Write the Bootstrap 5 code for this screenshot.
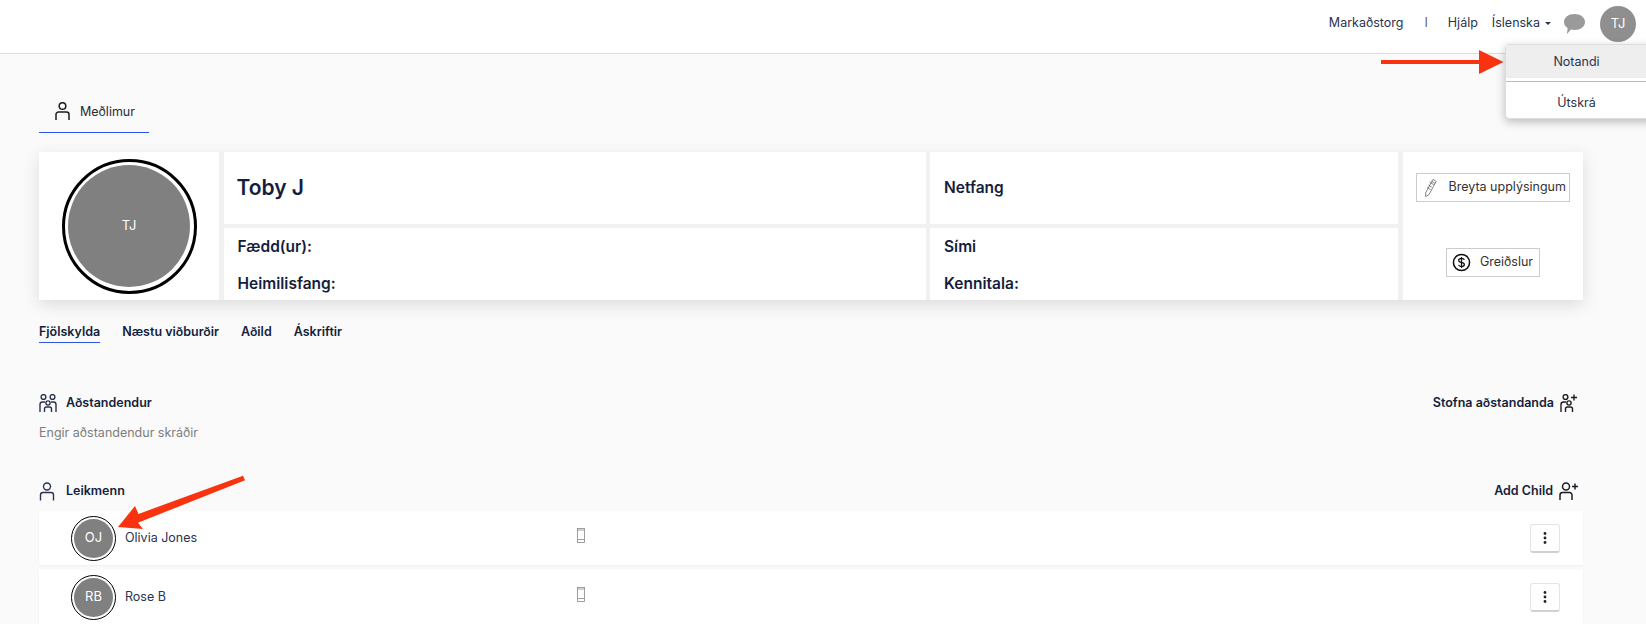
<!DOCTYPE html>
<html lang="is">
<head>
<meta charset="utf-8">
<title>Meðlimur</title>
<link href="https://cdn.jsdelivr.net/npm/bootstrap@5.3.0/dist/css/bootstrap.min.css" rel="stylesheet">
<style>
html,body{height:624px;overflow:hidden}
body{background:#fafafa;font-family:"Inter","Liberation Sans",sans-serif;color:#141e3c;font-size:12.5px;position:relative}
.topbar{height:54px;background:#fff;border-bottom:1px solid #dcdcdc;padding:0 10px 6px 0}
.topbar a{color:#2a3350;text-decoration:none;font-size:12.5px}
.sep{margin:0 20px 0 21px;color:#666}
.lang{margin:0 0 0 14px}
.caret-mark{display:inline-block;border:3px solid transparent;border-top-color:#2a3350;border-bottom:0;margin-left:5px;vertical-align:2px}
.chat-ico{margin:0 14px 0 12px}
.avatar-top{width:36px;height:36px;background:#8f8f8f;color:#fff;font-size:13px}
.user-menu{display:block;position:absolute;top:44px;left:1505px;width:160px;margin:0;padding:0;border:1px solid #ddd;border-radius:4px;box-shadow:0 3px 10px rgba(0,0,0,.25);height:75px;text-align:left;font-size:13px}
.user-menu .dropdown-item{width:141px;text-align:center;color:#2a3350;font-size:12.5px}
.menu-active{background:#eee;height:33px;line-height:33px;padding:0}
.menu-plain{height:40px;line-height:42px;padding:0}
.user-menu hr{margin:3px 0 0;border-color:#bbb}
.page-body{padding:0 63px 0 39px}
.main-tab{width:110px;height:79px;padding:0 0 12px 16px;border-bottom:1px solid #2a55e5;font-size:12.5px;gap:10px;color:#2b2b33}
.main-tab span{margin-bottom:-2px}
.profile-grid{display:grid;grid-template-columns:180px 702px 468px 180px;grid-template-rows:72px 72px;column-gap:4.5px;row-gap:4px;margin-top:19px;background:#f1f1f1;box-shadow:0 5px 16px rgba(0,0,0,.12)}
.cell{background:#fff}
.cell-avatar{grid-column:1;grid-row:1 / 3}
.cell-actions{grid-column:4;grid-row:1 / 3}
.ring-large{width:135px;height:135px;border:3px solid #000;background:#fff}
.disc-large{width:122px;height:122px;background:#808080;color:#fff;font-size:13px}
.cell-title{padding-left:13px;font-size:21px;font-weight:600}
.cell-label{padding-left:14px;font-size:15.5px;font-weight:600}
.cell-lines{padding:7px 0 0 14px;font-size:15.5px;font-weight:600;gap:13px}
.cell-lines div{line-height:24px}
.cell-actions{padding:21px 0 23px}
.act-btn{border:1px solid #ccc;background:#fff;height:29px;color:#333;font-size:12.5px;padding:0}
.act-edit{width:154px;padding-left:7px;gap:12px;white-space:nowrap}
.act-pay{width:94px;justify-content:center;gap:5px}
.sub-tabs{margin-top:24px;gap:22px;font-size:12.5px;font-weight:600;height:19px}
.sub-tabs span{padding-bottom:4px;height:19px;line-height:15px}
.sub-active{border-bottom:1px solid #2a55e5}
.sec-head{font-size:12.5px;font-weight:600;height:24px}
.sec-one{margin-top:48px}
.empty-note{color:#7d7d7d;font-size:12.5px;margin-top:8px;height:20px;line-height:20px}
.sec-two{margin-top:36px}
.add-link{gap:6px;margin-right:5px;font-size:12.5px}
.head-left{gap:9px}
.head-wide{gap:11px}
.member-row{background:#fff;height:54px;margin-bottom:5px;box-shadow:0 1px 2px rgba(0,0,0,.05);padding-left:32px;padding-right:23px}
.member-rows{margin-top:8px}
.ring-small{width:45px;height:45px;border:1px solid #000;background:#fff}
.disc-small{width:39px;height:39px;background:#808080;color:#fff;font-size:13px}
.member-name{width:452px;margin-left:9px;font-size:12.5px;color:#2a3350}
.phone-ico{margin-bottom:6px}
.kebab{width:30px;height:29px;background:#fff;border:1px solid #e4e4e4;border-bottom:2px solid #d0d0d0;border-radius:3px;padding:0}
.arrows{position:absolute;left:0;top:0;pointer-events:none}
</style>
</head>
<body>
<nav class="topbar d-flex align-items-center justify-content-end">
  <a href="#">Markaðstorg</a>
  <span class="sep">I</span>
  <a href="#">Hjálp</a>
  <a href="#" class="lang">Íslenska<span class="caret-mark"></span></a>
  <svg class="chat-ico" width="23" height="22" viewBox="0 0 23 22"><path d="M11.5 1C17.5 1 22 4.400 22 9s-4.500 8-10.500 8c-1.300 0-2.500-.2-3.600-.5L4 21l.6-6C2.300 13.600 1 11.500 1 9 1 4.400 5.500 1 11.500 1z" fill="#9a9a9a"/></svg>
  <div class="avatar-top rounded-circle d-flex align-items-center justify-content-center">TJ</div>
</nav>

<ul class="dropdown-menu user-menu">
  <li><a class="dropdown-item menu-active" href="#">Notandi</a></li>
  <li><hr class="dropdown-divider"></li>
  <li><a class="dropdown-item menu-plain" href="#">Útskrá</a></li>
</ul>

<main class="page-body">
  <div class="main-tab d-flex align-items-end">
    <svg width="15" height="18" viewBox="0 0 15 18" fill="none" stroke="#1c1c24" stroke-width="1.500"><circle cx="7.500" cy="4" r="3.300"/><path d="M1 18v-5.500A2.500 2.500 0 0 1 3.500 10h8a2.500 2.500 0 0 1 2.500 2.500V18"/></svg>
    <span>Meðlimur</span>
  </div>

  <section class="profile-grid">
    <div class="cell cell-avatar d-flex align-items-center justify-content-center">
      <div class="ring-large rounded-circle d-flex align-items-center justify-content-center">
        <div class="disc-large rounded-circle d-flex align-items-center justify-content-center">TJ</div>
      </div>
    </div>
    <div class="cell cell-title d-flex align-items-center">Toby J</div>
    <div class="cell cell-label d-flex align-items-center">Netfang</div>
    <div class="cell cell-actions d-flex flex-column align-items-center justify-content-between">
      <button class="act-btn act-edit d-flex align-items-center" type="button">
        <svg width="13" height="23" viewBox="0 0 16 24" fill="none" stroke="#444" stroke-width=".8"><path d="M11 2l4 2.500L6 21l-4 2 .1-4.500zM9.600 4.500l4 2.500M7 5.500l5 3M5.500 9l4 2.500M4 12l4 2.500"/></svg>
        Breyta upplýsingum
      </button>
      <button class="act-btn act-pay d-flex align-items-center" type="button">
        <svg width="19" height="19" viewBox="0 0 20 20" fill="none" stroke="#111" stroke-width="1.600"><circle cx="10" cy="10" r="8.500"/><path d="M13 7.300c-.4-1-1.500-1.600-3-1.600-1.700 0-3 .8-3 2.100 0 2.900 6 1.400 6 4.300 0 1.300-1.300 2.200-3 2.200-1.600 0-2.700-.7-3.100-1.800M10 4.300v11.400" stroke-width="1.300"/></svg>
        <span class="ms-1">Greiðslur</span>
      </button>
    </div>
    <div class="cell cell-lines d-flex flex-column">
      <div>Fædd(ur):</div>
      <div>Heimilisfang:</div>
    </div>
    <div class="cell cell-lines d-flex flex-column">
      <div>Sími</div>
      <div>Kennitala:</div>
    </div>
  </section>

  <div class="sub-tabs d-flex">
    <span class="sub-active">Fjölskylda</span>
    <span>Næstu viðburðir</span>
    <span>Aðild</span>
    <span>Áskriftir</span>
  </div>

  <div class="sec-head sec-one d-flex justify-content-between align-items-center">
    <div class="head-left d-flex align-items-center">
      <svg width="18" height="19" viewBox="0 0 18 19" fill="none" stroke="#2a3350" stroke-width="1.400"><circle cx="4.500" cy="3" r="2.400"/><circle cx="13.500" cy="3" r="2.400"/><circle cx="9" cy="9" r="2.100"/><path d="M1 18v-7.500A2.500 2.500 0 0 1 3.500 8H6M17 18v-7.500A2.500 2.500 0 0 0 14.500 8H12M5.500 18v-3A2 2 0 0 1 7.500 13h3a2 2 0 0 1 2 2v3"/></svg>
      <span>Aðstandendur</span>
    </div>
    <div class="add-link d-flex align-items-center">
      <span>Stofna aðstandanda</span>
      <svg width="18" height="19" viewBox="0 0 18 19" fill="none" stroke="#1c1c24" stroke-width="1.400"><circle cx="5.500" cy="3" r="2.400"/><circle cx="9" cy="9" r="2.100"/><path d="M1 18v-7.500A2.500 2.500 0 0 1 3.500 8H6M5.500 18v-3A2 2 0 0 1 7.500 13h3a2 2 0 0 1 2 2v3M11 3.500h6M14 .5v6"/></svg>
    </div>
  </div>
  <div class="empty-note">Engir aðstandendur skráðir</div>

  <div class="sec-head sec-two d-flex justify-content-between align-items-center">
    <div class="head-wide d-flex align-items-center">
      <svg width="16" height="19" viewBox="0 0 16 19" fill="none" stroke="#2a3350" stroke-width="1.400"><circle cx="8" cy="4.500" r="3.500"/><path d="M1.500 18.500V13a2.500 2.500 0 0 1 2.500-2.500h8a2.500 2.500 0 0 1 2.500 2.500v5.500"/></svg>
      <span>Leikmenn</span>
    </div>
    <div class="add-link d-flex align-items-center">
      <span>Add Child</span>
      <svg width="19" height="19" viewBox="0 0 19 19" fill="none" stroke="#1c1c24" stroke-width="1.500"><circle cx="7" cy="4.500" r="3.500"/><path d="M1 18v-5a2.500 2.500 0 0 1 2.500-2.500h7A2.500 2.500 0 0 1 13 13v5M13 4.500h6M16 1.500v6"/></svg>
    </div>
  </div>

  <div class="member-rows">
    <div class="member-row d-flex align-items-center">
      <div class="ring-small rounded-circle d-flex align-items-center justify-content-center flex-shrink-0">
        <div class="disc-small rounded-circle d-flex align-items-center justify-content-center">OJ</div>
      </div>
      <div class="member-name">Olivia Jones</div>
      <svg class="phone-ico" width="8" height="15" viewBox="0 0 8 15" fill="none" stroke="#888" stroke-width=".8"><rect x=".5" y=".5" width="7" height="14"/><path d="M.5 11.500h7M.5 2h7"/></svg>
      <button class="kebab ms-auto d-flex align-items-center justify-content-center" type="button" aria-label="Valmynd"><svg width="4" height="12" viewBox="0 0 4 12" fill="#222"><circle cx="2" cy="1.500" r="1.400"/><circle cx="2" cy="6" r="1.400"/><circle cx="2" cy="10.500" r="1.400"/></svg></button>
    </div>
    <div class="member-row d-flex align-items-center">
      <div class="ring-small rounded-circle d-flex align-items-center justify-content-center flex-shrink-0">
        <div class="disc-small rounded-circle d-flex align-items-center justify-content-center">RB</div>
      </div>
      <div class="member-name">Rose B</div>
      <svg class="phone-ico" width="8" height="15" viewBox="0 0 8 15" fill="none" stroke="#888" stroke-width=".8"><rect x=".5" y=".5" width="7" height="14"/><path d="M.5 11.500h7M.5 2h7"/></svg>
      <button class="kebab ms-auto d-flex align-items-center justify-content-center" type="button" aria-label="Valmynd"><svg width="4" height="12" viewBox="0 0 4 12" fill="#222"><circle cx="2" cy="1.500" r="1.400"/><circle cx="2" cy="6" r="1.400"/><circle cx="2" cy="10.500" r="1.400"/></svg></button>
    </div>
  </div>
</main>

<svg class="arrows" width="1646" height="624" viewBox="0 0 1646 624">
  <path d="M1381 60h98v-10l24.500 12-24.500 12v-10h-98z" fill="#f9330f"/>
  <path d="M243 475.800l2 4.400-107 42.500 5 6.300-25-2 17-21 3.500 7.900z" fill="#f9330f"/>
</svg>
</body>
</html>
